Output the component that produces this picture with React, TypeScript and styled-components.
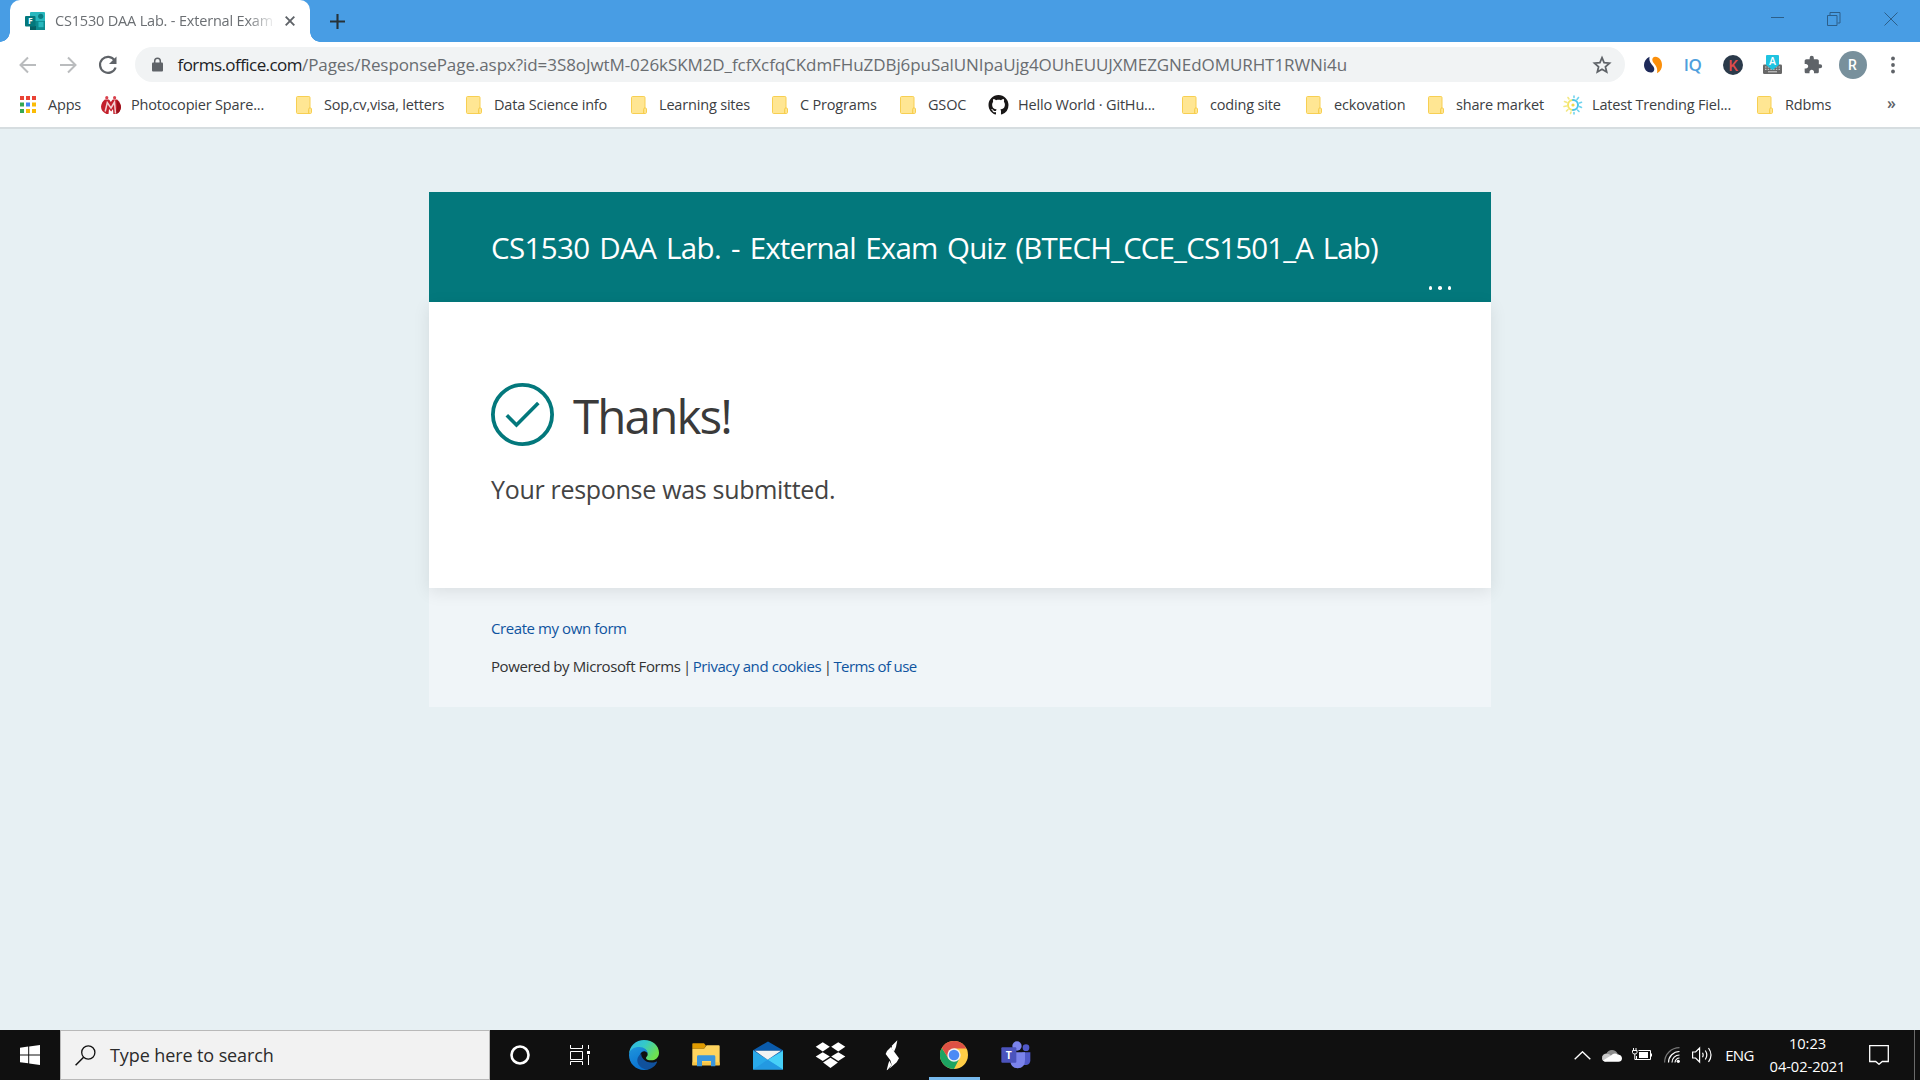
import React from 'react';
import styled, { createGlobalStyle } from 'styled-components';

const GlobalStyle = createGlobalStyle`
  *, *::before, *::after { box-sizing: border-box; }
  html, body { margin: 0; padding: 0; }
  body { font-family: 'Open Sans', 'Noto Sans', sans-serif; overflow: hidden; }
  svg { display: block; flex: none; }
`;

const Screen = styled.div`
  display: flex;
  flex-direction: column;
  width: 1920px;
  height: 1080px;
  overflow: hidden;
`;

/* ---------- browser chrome ---------- */

const TitleBar = styled.div`
  display: flex;
  height: 42px;
  padding-left: 10px;
  background: #489de4;
`;

const Tab = styled.div`
  position: relative;
  display: flex;
  align-items: center;
  width: 300px;
  height: 42px;
  padding: 0 15px;
  background: #fff;
  border-radius: 10px 10px 0 0;

  &::before,
  &::after {
    content: '';
    position: absolute;
    bottom: 0;
    width: 10px;
    height: 10px;
  }
  &::before {
    left: -10px;
    background: radial-gradient(circle at 0 0, transparent 9.5px, #fff 10px);
  }
  &::after {
    right: -10px;
    background: radial-gradient(circle at 100% 0, transparent 9.5px, #fff 10px);
  }
`;

const TabTitle = styled.div`
  width: 220px;
  margin: 0 10px;
  white-space: nowrap;
  font-size: 14.5px;
  letter-spacing: -0.18px;
  line-height: 22px;
  color: #6b6f73;
  mask-image: linear-gradient(to right, #000 192px, transparent 221px);
`;

const NewTab = styled.div`
  display: flex;
  align-items: center;
  padding-left: 20px;
`;

const WindowControls = styled.div`
  display: flex;
  align-items: center;
  gap: 43px;
  height: 37px;
  margin-left: auto;
  padding-right: 22px;
`;

const Toolbar = styled.div`
  display: flex;
  align-items: center;
  height: 45px;
  background: #fff;
`;

const NavButtons = styled.div`
  display: flex;
  align-items: center;
  width: 135px;
  padding-left: 16px;
  gap: 16px;
`;

const AddressBar = styled.div`
  display: flex;
  align-items: center;
  width: 1490px;
  height: 35px;
  padding: 0 13px 0 15px;
  border-radius: 18px;
  background: #f1f3f4;
`;

const Url = styled.div`
  flex: 1;
  margin-left: 12.5px;
  white-space: nowrap;
  font-size: 17px;
  letter-spacing: -0.075px;
  line-height: 24px;
  color: #696d71;
`;

const Host = styled.span`
  letter-spacing: -0.56px;
  color: #202124;
`;

const Extension = styled.div`
  display: flex;
  justify-content: center;
  width: 40px;
`;

const Extensions = styled.div`
  display: flex;
  align-items: center;
  padding-left: 7.5px;
`;

const IqLabel = styled.span`
  font-size: 17px;
  font-weight: 600;
  line-height: 24px;
  letter-spacing: -0.5px;
  color: #4f9fdd;
`;

const Avatar = styled.div`
  display: flex;
  align-items: center;
  justify-content: center;
  width: 28px;
  height: 28px;
  border-radius: 50%;
  background: #78909c;
  color: #fff;
  font: 500 14px/28px Roboto, sans-serif;
`;

const Bookmarks = styled.div`
  display: flex;
  align-items: center;
  height: 42px;
  padding: 0 24px 5px 20px;
  background: #fff;
  border-bottom: 2px solid #d6dde0;
`;

const Bookmark = styled.div<{ $w: number; $gap?: number }>`
  display: flex;
  align-items: center;
  gap: ${p => p.$gap ?? 12}px;
  width: ${p => p.$w}px;
  white-space: nowrap;
  font-size: 14.5px;
  letter-spacing: -0.18px;
  line-height: 20px;
  color: #3c4043;
`;

const Overflow = styled.div`
  margin-left: auto;
  padding-bottom: 3px;
  font-size: 16px;
  line-height: 20px;
  font-weight: 600;
  color: #5f6368;
`;

/* ---------- form page ---------- */

const Page = styled.main`
  flex: 1;
  display: flex;
  flex-direction: column;
  align-items: center;
  padding-top: 63px;
  background: #e7f0f3;
`;

const Form = styled.div`
  width: 1062px;
`;

const FormHeader = styled.header`
  display: flex;
  flex-direction: column;
  height: 110px;
  padding: 36px 40px 0 62px;
  background: #03787c;
`;

const FormTitle = styled.h1`
  margin: 0;
  white-space: nowrap;
  font-size: 29.5px;
  font-weight: 400;
  letter-spacing: -0.86px;
  word-spacing: 2.8px;
  line-height: 40px;
  color: #fff;
`;

const TitleStart = styled.span`
  letter-spacing: -0.62px;
`;

const MoreDots = styled.div`
  display: flex;
  align-self: flex-end;
  gap: 6px;
  margin-top: 18px;
`;

const MoreDot = styled.span`
  width: 3.5px;
  height: 3.5px;
  border-radius: 50%;
  background: #fff;
`;

const FormBody = styled.section`
  position: relative;
  height: 286px;
  padding: 81px 62px;
  background: #fff;
  box-shadow: 0 4px 16px rgba(0, 0, 0, 0.09);
`;

const ThanksRow = styled.div`
  display: flex;
  gap: 19px;
`;

const Thanks = styled.h2`
  margin: 0;
  padding-top: 1px;
  font-size: 47.5px;
  font-weight: 400;
  letter-spacing: -1.85px;
  line-height: 63px;
  color: #3a3a3a;
`;

const Message = styled.p`
  margin: 24px 0 0;
  font-size: 25px;
  letter-spacing: -0.3px;
  line-height: 36px;
  color: #444;
`;

const FormFooter = styled.footer`
  height: 119px;
  padding: 30px 62px 0;
  background: #f0f5f8;
`;

const FooterLine = styled.p`
  margin: 0 0 18px;
  white-space: nowrap;
  font-size: 15px;
  letter-spacing: -0.42px;
  line-height: 20px;
  color: #333;
`;

const Link = styled.a<{ $tight?: boolean }>`
  letter-spacing: ${p => (p.$tight ? '-0.62px' : 'inherit')};
  color: #0f549f;
`;

const Separator = styled.span`
  letter-spacing: -1.25px;
`;

/* ---------- taskbar ---------- */

const Taskbar = styled.div`
  display: flex;
  height: 50px;
  background: #101010;
`;

const Slot = styled.div<{ $w: number; $active?: boolean }>`
  display: flex;
  align-items: center;
  justify-content: center;
  width: ${p => p.$w}px;
  height: 50px;
  color: #fff;
  font-size: 15px;
  letter-spacing: -0.6px;
  background: ${p => (p.$active ? 'linear-gradient(#76b9ed, #76b9ed) center bottom / 51px 3px no-repeat' : 'none')};
`;

const SearchBox = styled.div`
  display: flex;
  align-items: center;
  gap: 14px;
  width: 430px;
  height: 50px;
  padding-left: 14px;
  border: 1px solid #b9b9b9;
  background: #f2f2f2;
  font-size: 18px;
  letter-spacing: -0.1px;
  color: #2b2b2b;
`;

const Tray = styled.div`
  display: flex;
  margin-left: auto;
`;

const Clock = styled.div`
  width: 91px;
  padding-top: 2px;
  text-align: center;
  font-size: 14.7px;
  letter-spacing: -0.08px;
  line-height: 23px;
  color: #fff;
`;

const ShowDesktop = styled.div`
  width: 6px;
  margin-left: 9px;
  border-left: 1px solid #6a6a6a;
`;

/* ---------- icons ---------- */

const FormsIcon = () => (
  <svg width="20" height="18" viewBox="0 0 20 18">
    <rect x="5" width="15" height="18" rx="1" fill="#27b7bd" />
    <rect x="5" y="9" width="15" height="9" fill="#0d8a8e" />
    <circle cx="15.7" cy="4.3" r="2.6" fill="#0b7d83" />
    <rect x="13.5" y="9.8" width="5" height="5.4" fill="#27b7bd" />
    <path d="M5 14h6v4H5z" fill="#066064" />
    <rect y="4" width="10.5" height="10.5" rx="1" fill="#03787c" />
    <text x="5.3" y="12.3" textAnchor="middle" fontSize="8.5" fontWeight="700" fill="#fff">F</text>
  </svg>
);

const Folder = () => (
  <svg width="16" height="18" viewBox="0 0 16 18">
    <path d="M1.6.5h11.3c.7 0 1.1.4 1.1 1.1V12h.4c.7 0 1.1.4 1.1 1v3.4c0 .7-.5 1.1-1.1 1.1H1.6C.9 17.5.5 17.1.5 16.4V1.6C.5.9.9.5 1.6.5z" fill="#ffe693" stroke="#f7cf52" />
    <path d="M14 12c-1 0-1.3.5-1.3 1.3v4" fill="none" stroke="#f5c93f" />
  </svg>
);

const AppsGrid = () => (
  <svg width="16" height="17" viewBox="0 0 16 17">
    {['#ea4335', '#ea4335', '#ea4335', '#34a853', '#4285f4', '#fbbc05', '#34a853', '#fbbc05', '#fbbc05'].map((c, i) => (
      <rect key={i} x={(i % 3) * 6} y={Math.floor(i / 3) * 6.5} width="4" height="4" fill={c} />
    ))}
  </svg>
);

const RedM = () => (
  <svg width="20" height="18" viewBox="0 0 20 18">
    <circle cx="5.8" cy="1.7" r="1.6" fill="#d9414c" />
    <circle cx="13.6" cy="1.7" r="1.6" fill="#d9414c" />
    <path d="M3.8 3.5h12.4Q20 7 20 11.5 19 17 14.5 18h-9Q0 15.5 0 10.5 .5 6 3.8 3.5z" fill="#c3202c" />
    <path d="M15.5 4q4.5 3.500 4.500 7.500-1 5.500-5 6.500 2-7 .5-14z" fill="#9b101b" />
    <path d="M7.3 2.500h5L9.900 6z" fill="#fff" />
    <path d="M4.2 15.5 6.300 6.500 10 12l3.500-6 1 11.500" fill="none" stroke="#f3d0d2" strokeWidth="1.5" />
    <path d="M7.500 18 8 13l2.200 2.500L12 13l.4 5z" fill="#fff" />
  </svg>
);

const GitHubMark = () => (
  <svg width="21" height="20" viewBox="0 0 16 16">
    <path fill="#191717" d="M8 0C3.58 0 0 3.58 0 8c0 3.54 2.29 6.53 5.47 7.59.4.07.55-.17.55-.38 0-.19-.01-.82-.01-1.49-2.01.37-2.53-.49-2.69-.94-.09-.23-.48-.94-.82-1.13-.28-.15-.68-.52-.01-.53.63-.01 1.08.58 1.23.82.72 1.21 1.87.87 2.33.66.07-.52.28-.87.51-1.07-1.78-.2-3.64-.89-3.64-3.95 0-.87.31-1.59.82-2.15-.08-.2-.36-1.02.08-2.12 0 0 .67-.21 2.2.82.64-.18 1.32-.27 2-.27s1.36.09 2 .27c1.53-1.04 2.2-.82 2.2-.82.44 1.1.16 1.92.08 2.12.51.56.82 1.27.82 2.15 0 3.07-1.87 3.75-3.65 3.95.29.25.54.73.54 1.48 0 1.07-.01 1.93-.01 2.2 0 .21.15.46.55.38A8.01 8.01 0 0 0 16 8c0-4.42-3.58-8-8-8z" />
  </svg>
);

const SunGear = () => (
  <svg width="20" height="20" viewBox="0 0 20 20">
    <g fill="none" strokeLinecap="round">
      <path d="M10 5a5 5 0 0 0 0 10" stroke="#f5e66a" strokeWidth="2" />
      <path d="M10 5a5 5 0 0 1 0 10" stroke="#4cc6ea" strokeWidth="2" />
      <path d="M6 4 5 2.5M4 7.5 1.500 6.500M3.500 11l-2.500.5M5 14.500 3.500 16M8 17 7.500 18.500" stroke="#f3e883" strokeWidth="1.6" />
      <path d="M11 2.5V1M14 4.500l1.500-2M16.500 8l2-.7M16.500 11.500l2 1M14.500 15l1.500 1.500M11 17.500V19" stroke="#6fd3ee" strokeWidth="1.6" />
    </g>
    <circle cx="10" cy="10" r="1.6" fill="#f0d94a" />
  </svg>
);

const bookmarks: { label: string; w: number; gap?: number; icon: React.ReactNode }[] = [
  { label: 'Apps', w: 81, icon: <AppsGrid /> },
  { label: 'Photocopier Spare...', w: 195, gap: 10, icon: <RedM /> },
  { label: 'Sop,cv,visa, letters', w: 170, icon: <Folder /> },
  { label: 'Data Science info', w: 165, icon: <Folder /> },
  { label: 'Learning sites', w: 141, icon: <Folder /> },
  { label: 'C Programs', w: 128, icon: <Folder /> },
  { label: 'GSOC', w: 88, icon: <Folder /> },
  { label: 'Hello World · GitHu...', w: 194, gap: 9, icon: <GitHubMark /> },
  { label: 'coding site', w: 124, icon: <Folder /> },
  { label: 'eckovation', w: 122, icon: <Folder /> },
  { label: 'share market', w: 135, icon: <Folder /> },
  { label: 'Latest Trending Fiel...', w: 194, gap: 9, icon: <SunGear /> },
  { label: 'Rdbms', w: 90, icon: <Folder /> },
];

const EdgeIcon = () => (
  <svg width="32" height="32" viewBox="24 27 96 96">
    <defs>
      <linearGradient id="edgeTop" x1="0" y1="0" x2="1" y2="0.5">
        <stop offset="0" stopColor="#2fb4e8" />
        <stop offset="0.5" stopColor="#35c9c9" />
        <stop offset="1" stopColor="#6ee04f" />
      </linearGradient>
      <linearGradient id="edgeLeft" x1="0" y1="0" x2="0.4" y2="1">
        <stop offset="0" stopColor="#1f95dc" />
        <stop offset="1" stopColor="#0a72d0" />
      </linearGradient>
    </defs>
    <path d="M27 73C28 47 48 30 72 30c27 0 45 18 45 38 0 15-11 23-24 23-9 0-15-3-15-7 0-3 5-4 5-11 0-11-10-18-24-18-15 0-29 8-32 18z" fill="url(#edgeTop)" />
    <path d="M27 75c1-16 15-24 31-24 15 0 25 9 25 21 0 0-3-8-11-8-9 0-15 11-12 24 3 16 17 31 27 30-5 1-10 2-15 2-25 0-45-20-45-45z" fill="url(#edgeLeft)" />
    <path d="M64 71c-14 8-16 24-5 37 9 10 23 14 35 7 8-4 14-11 17-18 1-2-1-3-3-2-13 6-30 2-38-8-5-6-7-12-6-16z" fill="#10519c" />
  </svg>
);

const ExplorerIcon = () => (
  <svg width="28" height="24" viewBox="216 38 84 72">
    <path d="M217 41q0-2 2-2h33l6 7-6 9h-35z" fill="#e09b00" />
    <path d="M217 55h35l8-10h36q3 0 3 3v57H217z" fill="#ffd45e" />
    <path d="M217 96h82v9H217z" fill="#f6c445" />
    <path d="M231 108V79q0-4 4-4h47q4 0 4 4v29h-13V92h-27v16z" fill="#3a96dd" />
  </svg>
);

const MailIcon = () => (
  <svg width="30" height="29" viewBox="399 32 90 86">
    <path d="M399 59 444 33 489 59z" fill="#0a5bab" />
    <path d="M399 59h90v58h-90z" fill="#29a9ea" />
    <path d="M489 62v55L443 88z" fill="#47d0f8" />
    <path d="M443 88 399 117h90z" fill="#2399e2" />
    <path d="M399 59h90l-5 3-41 26-39-26z" fill="#0b3f86" />
    <path d="M405 61h78L443 88z" fill="#f3f3f3" />
  </svg>
);

const DropboxIcon = () => (
  <svg width="31" height="27" viewBox="584 35 92 80">
    <g fill="#fff">
      <path d="m607 36 21 13-21 14-21-14z" />
      <path d="m653 36 21 13-21 14-21-14z" />
      <path d="m607 65 21 13-21 13-21-13z" />
      <path d="m653 65 21 13-21 13-21-13z" />
      <path d="m630 82 22 14-22 16-22-16z" />
    </g>
  </svg>
);

const BoltIcon = () => (
  <svg width="15" height="31" viewBox="792 29 45 93">
    <g fill="#fff">
      <path d="m829 30-15 15-3 9 8 10 6-14z" />
      <path d="m810 50-12 12-4 9 14 19 4 13-7 12 22-19 7-12-21-29z" />
      <path d="m805 91 7 13-12 14-3 2 5-20z" />
    </g>
  </svg>
);

const ChromeIcon = () => (
  <svg width="28" height="28" viewBox="0 0 48 48">
    <circle cx="24" cy="24" r="24" fill="#ffcd46" />
    <path d="M14.5 29.5 3.2 12A24 24 0 0 0 24 48l9.5-18.5z" fill="#1da462" />
    <path d="M3.2 12A24 24 0 0 1 45.3 13H24l-9.5 16.5z" fill="#dd5144" />
    <circle cx="24" cy="24" r="11.5" fill="#f1f1f1" />
    <circle cx="24" cy="24" r="9" fill="#4c8bf5" />
  </svg>
);

const TeamsIcon = () => (
  <svg width="30" height="28" viewBox="1142 32 90 84">
    <circle cx="1217" cy="52" r="10" fill="#5059c9" />
    <path d="M1206 66h24v24q0 12-12 14h-12z" fill="#5059c9" />
    <circle cx="1190" cy="47" r="14" fill="#7b83eb" />
    <path d="M1170 66h44v23q0 24-22 25-22-1-22-25z" fill="#7b83eb" />
    <rect x="1143" y="51" width="45" height="46" rx="3" fill="#4b53bc" />
    <text x="1165" y="85" textAnchor="middle" fontSize="31" fontWeight="700" letterSpacing="0" fill="#fff">T</text>
  </svg>
);

export default function App() {
  return (
    <Screen>
      <GlobalStyle />
      <TitleBar>
        <Tab>
          <FormsIcon />
          <TabTitle>CS1530 DAA Lab. - External Exam</TabTitle>
          <svg width="10" height="10" viewBox="0 0 10 10"><path d="M.7.7l8.6 8.6M9.3.7.7 9.3" stroke="#5f6368" strokeWidth="1.9" /></svg>
        </Tab>
        <NewTab>
          <svg width="15" height="15" viewBox="0 0 15 15"><path d="M7.5 0v15M0 7.5h15" stroke="#263238" strokeWidth="2.1" /></svg>
        </NewTab>
        <WindowControls>
          <svg width="14" height="14" viewBox="0 0 14 14"><path d="M1 5.5h13" stroke="#2c5f8a" /></svg>
          <svg width="14" height="14" viewBox="0 0 14 14"><path d="M.5 3.5H10v10H.5zM3 3V.5h10V11h-2.5" fill="none" stroke="#2c5f8a" /></svg>
          <svg width="14" height="14" viewBox="0 0 14 14"><path d="m.5.5 13 13M13.5.5l-13 13" stroke="#2c5f8a" /></svg>
        </WindowControls>
      </TitleBar>

      <Toolbar>
        <NavButtons>
          <svg width="24" height="24" viewBox="0 0 24 24"><path d="M20 12H4.5M12 4.5 4.5 12l7.500 7.500" fill="none" stroke="#babcbe" strokeWidth="2" /></svg>
          <svg width="24" height="24" viewBox="0 0 24 24"><path d="M4 12h15.5M12 4.5l7.500 7.500-7.500 7.500" fill="none" stroke="#babcbe" strokeWidth="2" /></svg>
          <svg width="24" height="24" viewBox="0 0 24 24"><path d="M18.7 7.4A8 8 0 1 0 19.6 14.5" fill="none" stroke="#5f6368" strokeWidth="2.2" /><path d="M20.5 3.5V11H13z" fill="#5f6368" /></svg>
        </NavButtons>
        <AddressBar>
          <svg width="15" height="16" viewBox="0 0 15 16"><rect x="2" y="5.5" width="11" height="9" rx="1" fill="#5f6368" /><path d="M4.7 6V4a2.8 2.8 0 0 1 5.6 0v2" fill="none" stroke="#5f6368" strokeWidth="1.5" /></svg>
          <Url><Host>forms.office.com</Host>/Pages/ResponsePage.aspx?id=3S8oJwtM-026kSKM2D_fcfXcfqCKdmFHuZDBj6puSalUNIpaUjg4OUhEUUJXMEZGNEdOMURHT1RWNi4u</Url>
          <svg width="20" height="20" viewBox="0 0 24 24"><path d="m12 3.2 2.5 6 6.5.6-4.9 4.3 1.5 6.3-5.6-3.4-5.6 3.400 1.500-6.300L3 9.800l6.500-.6z" fill="none" stroke="#5f6368" strokeWidth="2.1" /></svg>
        </AddressBar>
        <Extensions>
          <Extension>
            <svg width="18" height="18" viewBox="0 0 18 18">
              <path d="M5.5.8C2 2.500 0 5.500 0 9c0 4.500 3 7.500 6.800 7.500 2.600 0 4-2 3.300-4.500C9.200 9 4.500 7 5.500.8z" fill="#1e2a5a" />
              <path d="M11.5.8C9 .8 7.800 2.700 8.500 4.900c1.200 3.400 6 5.300 4.500 12.300C16.500 15.500 18 12.500 18 9c0-4.500-2.800-8.200-6.500-8.200z" fill="#fb8f0a" />
            </svg>
          </Extension>
          <Extension><IqLabel>IQ</IqLabel></Extension>
          <Extension>
            <svg width="20" height="20" viewBox="0 0 20 20">
              <circle cx="10" cy="10" r="10" fill="#2b3a4a" />
              <text x="10.2" y="15.5" textAnchor="middle" fontSize="15" fontWeight="500" fontFamily="Roboto" fill="#dd4b4b">K</text>
            </svg>
          </Extension>
          <Extension>
            <svg width="19" height="19" viewBox="0 0 19 19">
              <rect y="9.5" width="19" height="9.5" rx="1.2" fill="#686868" />
              <path d="M2 12h15M2 14.3h15" stroke="#d5d5d5" strokeDasharray="1.5 1.2" />
              <path d="M5 16.8h9" stroke="#d5d5d5" />
              <path d="M3 1q0-1 1-1h11q1 0 1 1v9l-6.5 5L3 10z" fill="#1fc3e0" />
              <text x="9.5" y="10" textAnchor="middle" fontSize="10.5" fontWeight="600" fill="#fff">A</text>
            </svg>
          </Extension>
          <Extension>
            <svg width="20" height="20" viewBox="0 0 24 24"><path fill="#5f6368" d="M20.5 11H19V7c0-1.1-.9-2-2-2h-4V3.5a2.5 2.5 0 0 0-5 0V5H4c-1.1 0-2 .9-2 2v3.8h1.5c1.5 0 2.7 1.2 2.7 2.7S5 16.2 3.5 16.2H2V20c0 1.1.9 2 2 2h3.8v-1.5c0-1.5 1.2-2.7 2.7-2.7s2.7 1.2 2.7 2.7V22H17c1.1 0 2-.9 2-2v-4h1.5a2.5 2.5 0 0 0 0-5z" /></svg>
          </Extension>
          <Extension><Avatar>R</Avatar></Extension>
          <Extension>
            <svg width="4" height="18" viewBox="0 0 4 18"><g fill="#5f6368"><circle cx="2" cy="2.5" r="1.9" /><circle cx="2" cy="9" r="1.9" /><circle cx="2" cy="15.5" r="1.9" /></g></svg>
          </Extension>
        </Extensions>
      </Toolbar>

      <Bookmarks>
        {bookmarks.map(b => (
          <Bookmark key={b.label} $w={b.w} $gap={b.gap}>{b.icon}{b.label}</Bookmark>
        ))}
        <Overflow>»</Overflow>
      </Bookmarks>

      <Page>
        <Form>
          <FormHeader>
            <FormTitle><TitleStart>CS1530 DAA Lab. - </TitleStart>External Exam Quiz (BTECH_CCE_CS1501_A Lab)</FormTitle>
            <MoreDots><MoreDot /><MoreDot /><MoreDot /></MoreDots>
          </FormHeader>
          <FormBody>
            <ThanksRow>
              <svg width="63" height="63" viewBox="0 0 63 63">
                <circle cx="31.5" cy="31.5" r="29.6" fill="none" stroke="#03787c" strokeWidth="3.8" />
                <path d="M15.8 32.3 25.5 42 47.3 20" fill="none" stroke="#03787c" strokeWidth="3.6" />
              </svg>
              <Thanks>Thanks!</Thanks>
            </ThanksRow>
            <Message>Your response was submitted.</Message>
          </FormBody>
          <FormFooter>
            <FooterLine><Link>Create my own form</Link></FooterLine>
            <FooterLine>
              Powered by Microsoft Forms<Separator> | </Separator><Link>Privacy and cookies</Link><Separator> | </Separator><Link $tight>Terms of use</Link>
            </FooterLine>
          </FormFooter>
        </Form>
      </Page>

      <Taskbar>
        <Slot $w={60}>
          <svg width="20" height="20" viewBox="0 0 20 20"><path fill="#fff" d="M0 2.7 8.2 1.6V9.4H0zM9.2 1.4 20 0v9.4H9.2zM0 10.4h8.2v7.9L0 17.2zM9.2 10.4H20V20L9.2 18.5z" /></svg>
        </Slot>
        <SearchBox>
          <svg width="21" height="21" viewBox="0 0 21 21"><circle cx="13.3" cy="7.5" r="6.6" fill="none" stroke="#111" strokeWidth="1.3" /><path d="m8.6 12.2-8 8" stroke="#111" strokeWidth="1.5" /></svg>
          Type here to search
        </SearchBox>
        <Slot $w={60}>
          <svg width="20" height="20" viewBox="0 0 20 20"><circle cx="10" cy="10" r="8.5" fill="none" stroke="#fff" strokeWidth="2.6" /></svg>
        </Slot>
        <Slot $w={63}>
          <svg width="23" height="20" viewBox="0 0 23 20"><path d="M.5 0v3.5h12V0M.5 6.5h12v8H.5zM.5 20v-3.5h12V20M18.5 0v4M18.5 10v10" fill="none" stroke="#fff" /><rect x="17" y="6" width="3" height="3" fill="#fff" /></svg>
        </Slot>
        <Slot $w={62}><EdgeIcon /></Slot>
        <Slot $w={62}><ExplorerIcon /></Slot>
        <Slot $w={62}><MailIcon /></Slot>
        <Slot $w={62}><DropboxIcon /></Slot>
        <Slot $w={62}><BoltIcon /></Slot>
        <Slot $w={62} $active><ChromeIcon /></Slot>
        <Slot $w={62}><TeamsIcon /></Slot>

        <Tray>
          <Slot $w={30}><svg width="17" height="9" viewBox="0 0 17 9"><path d="M.7 8.3 8.5.8l7.800 7.500" fill="none" stroke="#fff" strokeWidth="1.4" /></svg></Slot>
          <Slot $w={30}>
            <svg width="20" height="13" viewBox="0 0 20 13">
              <path d="M4.5 4.5a6 6 0 0 1 11 0L19 7 4 11 0 8q1-3.5 4.5-3.5z" fill="#8d8d8d" />
              <path d="M0 9.5C0 6.5 2 4.8 4.8 4.8c2 0 3 .9 4.2 1.7L4 12.5Q0 12.5 0 9.5z" fill="#c9c9c9" />
              <path d="M9 6.5q3.5-3.5 6.8-.8Q20 6 20 9.4q-.3 3.3-3.6 3.3H4q-2 0-3-1.2z" fill="#fff" />
            </svg>
          </Slot>
          <Slot $w={30}>
            <svg width="20" height="14" viewBox="0 0 20 14">
              <path d="M6.5 2.5h12v9H4.5V8M19.5 5.5v3" fill="none" stroke="#fff" />
              <rect x="7" y="4" width="9" height="6" fill="#fff" />
              <path d="M1.5 0v2.5M4 0v2.5M.5 2.500h4.500v2Q5 6 2.800 6T.5 4.500zM2.800 6v5.500h2" fill="none" stroke="#fff" />
            </svg>
          </Slot>
          <Slot $w={30}>
            <svg width="16" height="16" viewBox="0 0 16 16">
              <g fill="none" strokeWidth="1.2">
                <path d="M.6 15.5A14.9 14.9 0 0 1 15.5.6" stroke="#777" />
                <path d="M4.5 15.5a11 11 0 0 1 11-11M8 15.5A7.5 7.5 0 0 1 15.5 8" stroke="#fff" />
                <path d="M11 15.5a4.5 4.5 0 0 1 4.5-4.5" stroke="#fff" />
              </g>
              <circle cx="14.3" cy="14.3" r="1.6" fill="#fff" />
            </svg>
          </Slot>
          <Slot $w={30}>
            <svg width="21" height="18" viewBox="0 0 21 18">
              <path d="M.6 6h3l4-4v14l-4-4h-3zM10.5 6.8q1.3 2.2 0 4.4M13.3 4.5q3 4.5 0 9M16.5 2q5 7 0 14" fill="none" stroke="#fff" strokeWidth="1.2" />
            </svg>
          </Slot>
          <Slot $w={45}>ENG</Slot>
          <Clock>10:23<br />04-02-2021</Clock>
          <Slot $w={52}>
            <svg width="20" height="20" viewBox="0 0 20 20"><path d="M.7.7h18.6v15.8h-6L10 19.3 6.7 16.5h-6z" fill="none" stroke="#fff" strokeWidth="1.3" /></svg>
          </Slot>
          <ShowDesktop />
        </Tray>
      </Taskbar>
    </Screen>
  );
}
